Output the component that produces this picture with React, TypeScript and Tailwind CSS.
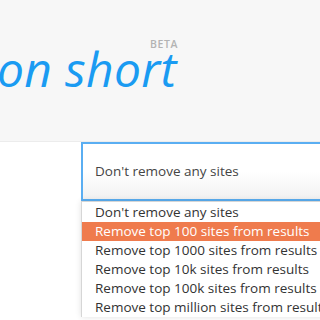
import React from "react";

const items = [
  "Don't remove any sites",
  "Remove top 100 sites from results",
  "Remove top 1000 sites from results",
  "Remove top 10k sites from results",
  "Remove top 100k sites from results",
  "Remove top million sites from results",
];

export default function App() {
  return (
    <div
      className="relative w-[320px] h-[320px] overflow-hidden bg-white"
      style={{ fontFamily: '"Open Sans", "Noto Sans", sans-serif' }}
    >
      <div className="h-[142px] bg-[#f7f7f7] border-b border-[#ececec] relative">
        <span className="absolute left-[150px] top-[37px] text-[10.5px] font-semibold text-[#b3b3b3] tracking-[0.6px]">
          BETA
        </span>
        <div className="absolute left-[-3px] top-[45px] flex items-start">
          <span className="text-[48px] leading-none italic text-[#1a9bf2] whitespace-nowrap tracking-[0.3px]">
            on short
          </span>
        </div>
      </div>
      <div className="ml-[81px] w-[260px] h-[59px] border-2 border-[#5aaef2] bg-gradient-to-b from-white via-white to-[#f1f1f1] flex items-center pl-[12px]">
        <span className="text-[13.5px] text-[#444]">Don't remove any sites</span>
      </div>
      <div className="absolute left-[81px] top-[201px] w-[260px] bg-white border-l border-t border-[#d6d6d6] shadow-[0_0_6px_rgba(0,0,0,0.12)] pt-[1px]">
        {items.map((t, i) => (
          <div
            key={t}
            className={
              "h-[19px] flex items-center pl-[13px] text-[13.5px] whitespace-nowrap " +
              (i === 1 ? "bg-[#ef7b4d] text-white" : "text-[#333]")
            }
          >
            {t}
          </div>
        ))}
      </div>
    </div>
  );
}
